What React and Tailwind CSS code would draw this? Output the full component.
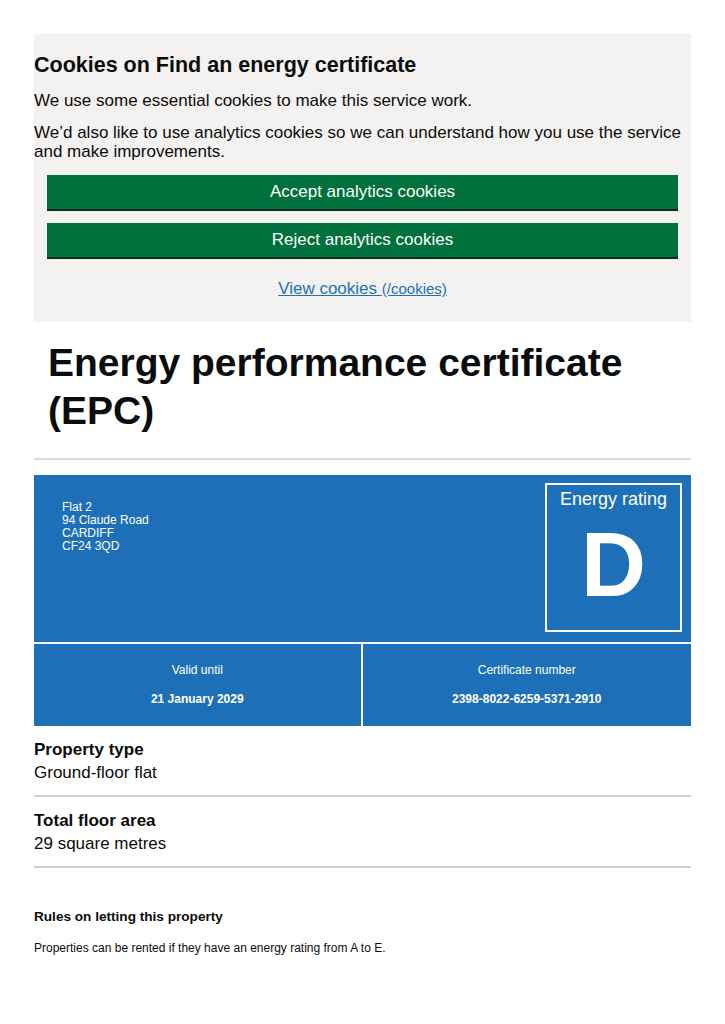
import React from 'react';

export default function App() {
  const font = { fontFamily: '"Liberation Sans", Arial, sans-serif' };

  return (
    <div className="bg-white text-[#0b0c0c] min-h-[1024px]" style={font}>
      <div className="px-[34px] pt-[34px]">

        {/* COOKIE BANNER */}
        <div className="bg-[#f3f2f1] pt-[18px] pb-[20px]">
          <h2 className="text-[21.5px] font-bold leading-[26px] mb-[13px]">Cookies on Find an energy certificate</h2>
          <p className="text-[17px] leading-[20px] mb-[12px]">We use some essential cookies to make this service work.</p>
          <p className="text-[17px] leading-[19px]">We’d also like to use analytics cookies so we can understand how you use the service and make improvements.</p>
          <div className="px-[13px] mt-[14px] flex flex-col gap-[14px]">
            <button className="w-full h-[34px] bg-[#00703c] text-white text-[17px] shadow-[0_2px_0_#002d18]">Accept analytics cookies</button>
            <button className="w-full h-[34px] bg-[#00703c] text-white text-[17px] shadow-[0_2px_0_#002d18]">Reject analytics cookies</button>
          </div>
          <div className="text-center mt-[19px]">
            <a href="#" className="text-[17px] text-[#1d70b8] underline">View cookies <span className="text-[15px]">(/cookies)</span></a>
          </div>
        </div>

        {/* TITLE */}
        <h1 className="px-[14px] pt-[17px] text-[39px] font-bold leading-[48px]">Energy performance certificate (EPC)</h1>
        <hr className="mt-[23px] border-0 border-t-2 border-[#dcdcdc]" />

        {/* EPC SUMMARY */}
        <div className="mt-[15px] bg-[#1d70b8] text-white">
          <div className="flex justify-between pl-[28px] pr-[9px] pt-[8px] pb-[10px]">
            <div className="pt-[18px] text-[12px] leading-[13px]">
              <div>Flat 2</div>
              <div>94 Claude Road</div>
              <div>CARDIFF</div>
              <div>CF24 3QD</div>
            </div>
            <div className="w-[137px] h-[149px] border-2 border-white flex flex-col items-center">
              <div className="text-[18px] leading-[22px] mt-[3px]">Energy rating</div>
              <div className="text-[90px] font-bold leading-[90px] mt-[10px]">D</div>
            </div>
          </div>
          <div className="grid grid-cols-2 border-t-2 border-white">
            <div className="h-[82px] flex flex-col items-center justify-center gap-[11px] text-[12px] border-r-2 border-white">
              <div>Valid until</div>
              <div className="font-bold">21 January 2029</div>
            </div>
            <div className="h-[82px] flex flex-col items-center justify-center gap-[11px] text-[12px]">
              <div>Certificate number</div>
              <div className="font-bold">2398-8022-6259-5371-2910</div>
            </div>
          </div>
        </div>

        {/* PROPERTY DETAILS */}
        <div className="pt-[13px] pb-[10px] border-b-2 border-[#cfcfcf]">
          <div className="text-[17px] font-bold leading-[22px]">Property type</div>
          <div className="text-[17px] leading-[24px]">Ground-floor flat</div>
        </div>
        <div className="pt-[13px] pb-[10px] border-b-2 border-[#cfcfcf]">
          <div className="text-[17px] font-bold leading-[22px]">Total floor area</div>
          <div className="text-[17px] leading-[24px]">29 square metres</div>
        </div>

        {/* RULES */}
        <h3 className="mt-[41px] text-[13.6px] font-bold leading-[16px]">Rules on letting this property</h3>
        <p className="mt-[16px] text-[12px] leading-[14px]">Properties can be rented if they have an energy rating from A to E.</p>
      </div>
    </div>
  );
}
